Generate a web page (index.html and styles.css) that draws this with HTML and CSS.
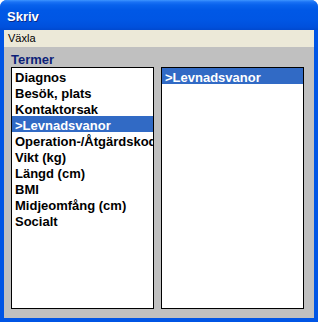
FILE: index.html
```html
<!DOCTYPE html>
<html>
<head>
<meta charset="utf-8">
<link rel="stylesheet" href="styles.css">
</head>
<body>
<div class="window">
  <div class="titlebar"><span class="title">Skriv</span></div>
  <div class="frame">
    <div class="menubar"><span class="menu-item">Växla</span></div>
    <div class="content">
      <div class="label">Termer</div>
      <div class="lists">
        <ul class="listbox">
          <li>Diagnos</li>
          <li>Besök, plats</li>
          <li>Kontaktorsak</li>
          <li class="selected">&gt;Levnadsvanor</li>
          <li>Operation-/Åtgärdskod</li>
          <li>Vikt (kg)</li>
          <li>Längd (cm)</li>
          <li>BMI</li>
          <li>Midjeomfång (cm)</li>
          <li>Socialt</li>
        </ul>
        <ul class="listbox">
          <li class="selected">&gt;Levnadsvanor</li>
        </ul>
      </div>
    </div>
  </div>
</div>
</body>
</html>
```
FILE: styles.css
```css
html, body {
  margin: 0;
  padding: 0;
  background: #ffffff;
}
.window {
  width: 318px;
  height: 322px;
  display: flex;
  flex-direction: column;
  background: #0055e5;
  border-radius: 7px 7px 0 0;
  overflow: hidden;
  box-sizing: border-box;
}
.titlebar {
  height: 30px;
  flex: none;
  background: linear-gradient(#3d95ff 0px, #1a72f5 2px, #0862ec 5px, #0058e6 10px, #0056e4 20px, #0050dc 27px, #0049cf 30px);
  display: flex;
  align-items: center;
  padding-left: 7px;
  box-sizing: border-box;
}
.title {
  font-family: "Liberation Sans", Arial, sans-serif;
  font-weight: bold;
  font-size: 13px;
  color: #ffffff;
  text-shadow: 1px 1px 0 #0a2a8a;
  line-height: 15px;
  margin-top: 3px;
}
.frame {
  flex: 1;
  display: flex;
  flex-direction: column;
  margin: 0 4px 4px 4px;
  min-height: 0;
}
.menubar {
  height: 17px;
  flex: none;
  background: #ece9d8;
  display: flex;
  align-items: center;
  padding-left: 4px;
}
.menu-item {
  font-family: "Liberation Sans", Arial, sans-serif;
  font-size: 11px;
  color: #000000;
  line-height: 13px;
}
.content {
  flex: 1;
  background: #c0c0c0;
  padding: 6px 10px 9px 7px;
  display: flex;
  flex-direction: column;
  min-height: 0;
}
.label {
  font-family: "Liberation Sans", Arial, sans-serif;
  font-weight: bold;
  font-size: 13px;
  line-height: 14px;
  color: #0c1f78;
  flex: none;
}
.lists {
  flex: 1;
  display: grid;
  grid-template-columns: 143px 143px;
  column-gap: 7px;
  min-height: 0;
}
.listbox {
  list-style: none;
  margin: 0;
  padding: 0;
  background: #ffffff;
  border: 1px solid #000000;
  overflow: hidden;
}
.listbox li {
  font-family: "Liberation Sans", Arial, sans-serif;
  font-weight: bold;
  font-size: 13px;
  line-height: 19px;
  height: 16px;
  padding-left: 3px;
  color: #000000;
  white-space: nowrap;
}
.listbox li.selected {
  background: #316ac5;
  color: #ffffff;
}
```
